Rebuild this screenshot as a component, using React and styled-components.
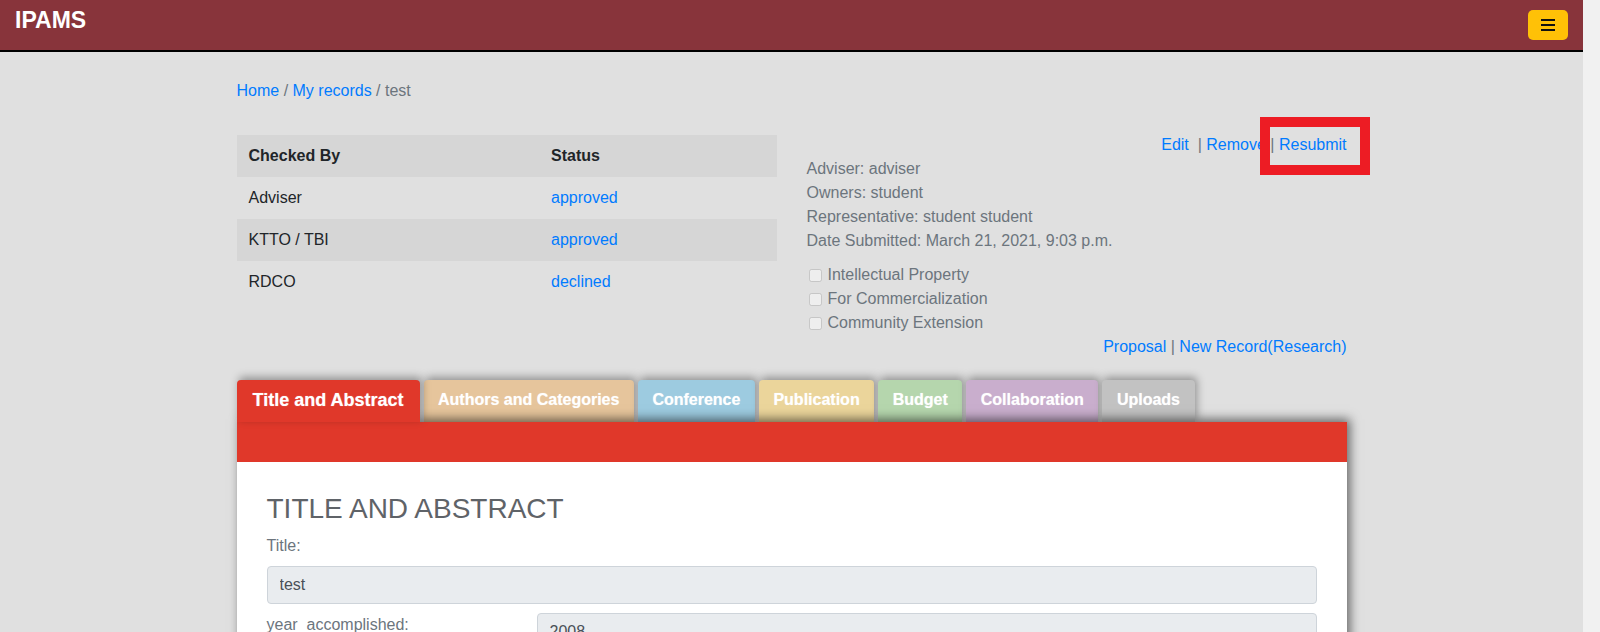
import React from "react";
import styled, { createGlobalStyle } from "styled-components";

const GlobalStyle = createGlobalStyle`
  html {
    background: #f1f1f1;
  }
  html, body {
    margin: 0;
    padding: 0;
  }
  body {
    font-family: "Liberation Sans", Arial, sans-serif;
    font-size: 16px;
    line-height: 1.5;
    color: #212529;
  }
  * {
    box-sizing: border-box;
  }
`;

const statuses = [
  { by: "Adviser", status: "approved" },
  { by: "KTTO / TBI", status: "approved" },
  { by: "RDCO", status: "declined" },
];

const info = [
  "Adviser: adviser",
  "Owners: student",
  "Representative: student student",
  "Date Submitted: March 21, 2021, 9:03 p.m.",
];

const flags = ["Intellectual Property", "For Commercialization", "Community Extension"];

const tabs = [
  { label: "Title and Abstract", color: "#e0382a" },
  { label: "Authors and Categories", color: "#e6c59c" },
  { label: "Conference", color: "#9dcbe0" },
  { label: "Publication", color: "#ebd59b" },
  { label: "Budget", color: "#b5d6ad" },
  { label: "Collaboration", color: "#c9aecd" },
  { label: "Uploads", color: "#c2c2c2" },
];

const App = () => {
  return (
    <Page>
      <GlobalStyle />
      <Navbar>
        <Brand>IPAMS</Brand>
        <Toggler aria-label="menu">
          <span />
          <span />
          <span />
        </Toggler>
      </Navbar>
      <Container>
        <Breadcrumb>
          <a href="#">Home</a> / <a href="#">My records</a> / test
        </Breadcrumb>
        <Row>
          <Col>
            <Table>
              <thead>
                <tr>
                  <th>Checked By</th>
                  <th>Status</th>
                </tr>
              </thead>
              <tbody>
                {statuses.map((s, index) => (
                  <tr key={index}>
                    <td>{s.by}</td>
                    <td>
                      <a href="#">{s.status}</a>
                    </td>
                  </tr>
                ))}
              </tbody>
            </Table>
          </Col>
          <Col>
            <Actions>
              <a href="#">Edit</a>&nbsp; | <a href="#">Remove</a> |{" "}
              <Marked>
                <a href="#">Resubmit</a>
                <Highlight />
              </Marked>
            </Actions>
            {info.map((line, index) => (
              <InfoLine key={index}>{line}</InfoLine>
            ))}
            <Flags>
              {flags.map((flag, index) => (
                <Flag key={index}>
                  <input type="checkbox" disabled />
                  {flag}
                </Flag>
              ))}
            </Flags>
            <Actions>
              <a href="#">Proposal</a> | <a href="#">New Record(Research)</a>
            </Actions>
          </Col>
        </Row>
        <Tabs>
          {tabs.map((tab, index) => (
            <Tab key={index} $color={tab.color} $active={index === 0}>
              {tab.label}
            </Tab>
          ))}
        </Tabs>
        <Panel>
          <PanelBar />
          <PanelBody>
            <Heading>TITLE AND ABSTRACT</Heading>
            <Label>Title:</Label>
            <Input value="test" disabled readOnly />
            <FormRow>
              <Label>year_accomplished:</Label>
              <Input value="2008" disabled readOnly />
            </FormRow>
            <Label>Abstract:</Label>
            <TextArea value="test" disabled readOnly />
          </PanelBody>
        </Panel>
      </Container>
    </Page>
  );
};

export default App;

const Page = styled.div`
  margin-right: 17px;
  min-height: 100vh;
  background: #e0e0e0;
`;

const Navbar = styled.nav`
  height: 52px;
  background: #88343b;
  border-bottom: 2px solid #000;
  padding: 0 15px;
  display: flex;
  justify-content: space-between;
  align-items: flex-start;
`;

const Brand = styled.div`
  color: #fff;
  font-weight: 700;
  font-size: 23px;
  line-height: 1.2;
  padding-top: 7px;
`;

const Toggler = styled.button`
  margin-top: 10px;
  width: 40px;
  height: 30px;
  border: none;
  border-radius: 5px;
  background: #ffc107;
  display: flex;
  flex-direction: column;
  align-items: center;
  justify-content: center;
  gap: 3px;
  padding: 0;
  span {
    display: block;
    width: 14px;
    height: 2px;
    background: #111;
  }
`;

const Container = styled.div`
  max-width: 1140px;
  margin: 0 auto;
  padding: 0 15px 40px;
  a {
    color: #007bff;
    text-decoration: none;
  }
`;

const Breadcrumb = styled.div`
  margin-top: 27px;
  color: #6c757d;
`;

const Row = styled.div`
  display: flex;
  margin: 30px -15px 0;
`;

const Col = styled.div`
  flex: 0 0 50%;
  padding: 0 15px;
`;

const Table = styled.table`
  width: 100%;
  margin-top: 2px;
  border-collapse: collapse;
  th,
  td {
    text-align: left;
    padding: 9px 12px;
    line-height: 24px;
  }
  th {
    font-weight: 700;
  }
  thead tr,
  tbody tr:nth-child(even) {
    background: #d6d6d6;
  }
`;

const Actions = styled.div`
  text-align: right;
  color: #6c757d;
`;

const Marked = styled.span`
  position: relative;
  display: inline-block;
`;

const Highlight = styled.span`
  position: absolute;
  left: -19px;
  right: -23px;
  top: -16px;
  bottom: -18px;
  border: 10px solid #ed1c24;
  pointer-events: none;
`;

const InfoLine = styled.div`
  color: #6c757d;
`;

const Flags = styled.div`
  margin-top: 10px;
`;

const Flag = styled.label`
  display: flex;
  align-items: center;
  color: #6c757d;
  input {
    width: 13px;
    height: 13px;
    margin: 0 6px 0 2px;
  }
`;

const Tabs = styled.ul`
  list-style: none;
  margin: 21px 0 0;
  padding: 0;
  display: flex;
  gap: 4px;
`;

const Tab = styled.li`
  position: relative;
  z-index: ${(p) => (p.$active ? 2 : 0)};
  height: 42px;
  line-height: 40px;
  padding: 0 ${(p) => (p.$active ? 16 : 14.5)}px;
  background: ${(p) => p.$color};
  color: #fff;
  font-weight: 700;
  font-size: ${(p) => (p.$active ? 18 : 16)}px;
  border-radius: 4px 4px 0 0;
  box-shadow: 2px -3px 8px rgba(0, 0, 0, 0.35);
  text-shadow: 0 0 1px rgba(255, 255, 255, 0.6);
`;

const Panel = styled.div`
  position: relative;
  z-index: 1;
  background: #fff;
  box-shadow: 3px -3px 10px rgba(0, 0, 0, 0.55);
`;

const PanelBar = styled.div`
  height: 40px;
  background: #e0382a;
`;

const PanelBody = styled.div`
  padding: 30px;
`;

const Heading = styled.h3`
  margin: 0 0 8px;
  font-size: 28px;
  font-weight: 400;
  line-height: 1.2;
  color: #5f6368;
`;

const Label = styled.div`
  color: #6c757d;
  margin-bottom: 8px;
`;

const Input = styled.input`
  display: block;
  width: 100%;
  height: 38px;
  padding: 6px 12px;
  font: inherit;
  color: #495057;
  background: #e9ecef;
  border: 1px solid #ced4da;
  border-radius: 4px;
  margin-bottom: 9px;
`;

const FormRow = styled.div`
  display: grid;
  grid-template-columns: 255px 1fr;
  gap: 15px;
  ${Label} {
    margin: 0;
  }
`;

const TextArea = styled.textarea`
  display: block;
  width: 100%;
  height: 150px;
  padding: 6px 12px;
  font: inherit;
  color: #495057;
  background: #e9ecef;
  border: 1px solid #ced4da;
  border-radius: 4px;
  resize: none;
`;
